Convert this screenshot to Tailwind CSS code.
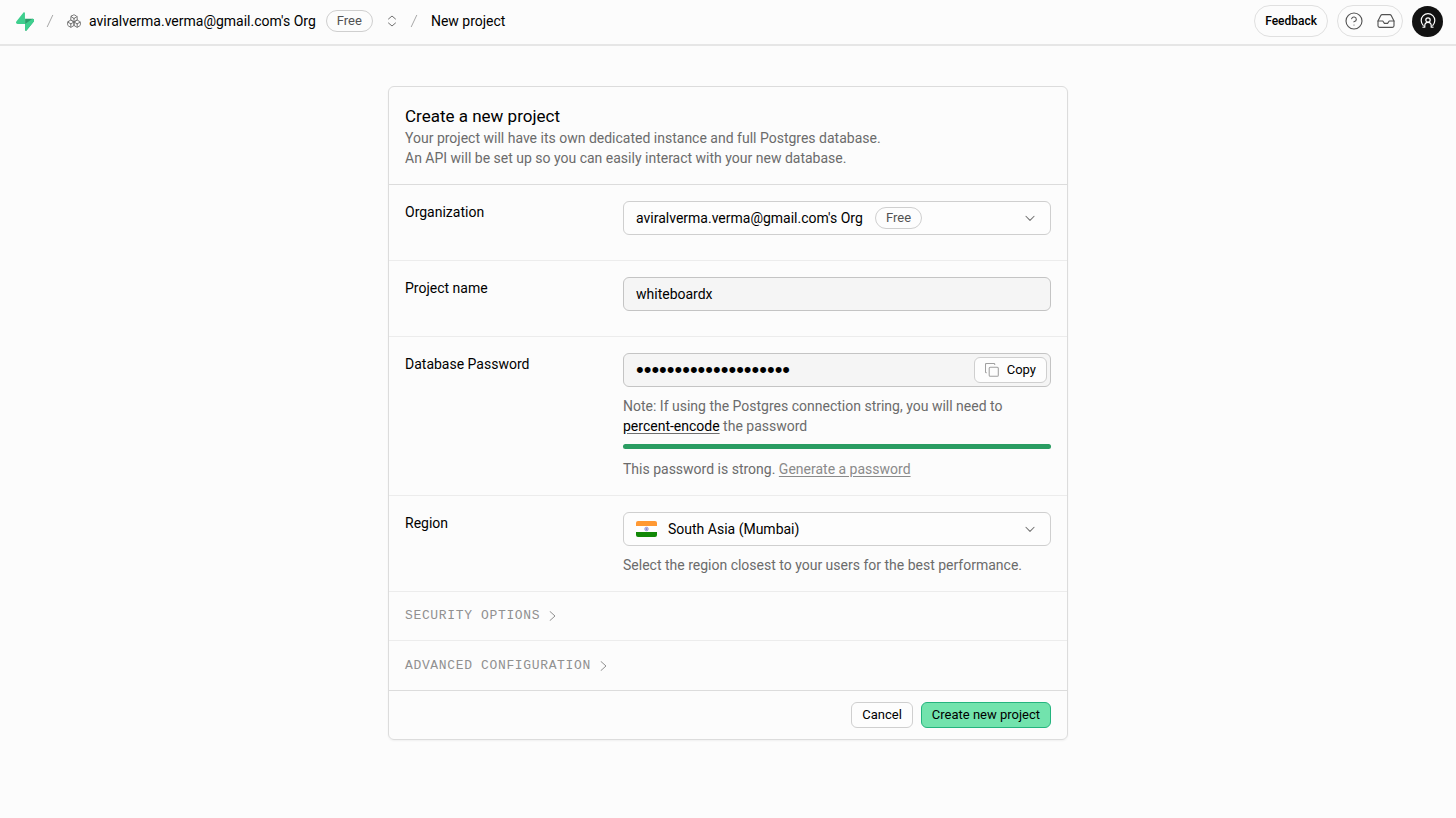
<!DOCTYPE html>
<html lang="en">
<head>
  <meta charset="UTF-8" />
  <meta name="viewport" content="width=device-width, initial-scale=1.0" />
  <title>New project</title>
  <script src="https://cdn.jsdelivr.net/npm/@tailwindcss/browser@4"></script>
</head>
<body class="min-h-screen bg-[#fcfcfc] font-['Roboto',sans-serif] text-[14px] leading-5 text-[#171717]">

  <header class="flex items-center justify-between h-[46px] pb-[2px] pl-4 pr-[13px] border-b-2 border-[#e6e6e6]">
    <nav class="flex items-center" aria-label="Breadcrumb">
      <a href="#" aria-label="Home">
        <svg class="w-[18px] h-[19px]" viewBox="0 0 109 113" fill="none">
          <path d="M63.7 110.3c-2.9 3.6-8.7 1.6-8.7-3V40h45.2c8.2 0 12.8 9.5 7.7 15.9z" fill="#2a9d6a" />
          <path d="M63.7 110.3c-2.9 3.6-8.7 1.6-8.7-3V72l45-32c8.4 0 13 9.5 7.9 15.9z" fill="#3ecf8e" />
          <path d="M45.3 2.1c2.9-3.6 8.7-1.6 8.8 3l.4 67.2H9.8c-8.2 0-12.8-9.5-7.7-15.9z" fill="#3ecf8e" />
        </svg>
      </a>
      <svg class="ml-2 w-4 h-4 text-[#a8a8a8]" viewBox="0 0 24 24" fill="none" stroke="currentColor" stroke-width="1.5" stroke-linecap="round"><path d="M16 3.5 8 20.5" /></svg>
      <a href="#" class="ml-[9px] flex items-center gap-2 text-black">
        <svg class="w-[14px] h-[14px] text-[#707070]" viewBox="1 1 22 22" fill="none" stroke="currentColor" stroke-width="1.5" stroke-linecap="round" stroke-linejoin="round">
          <path d="M2.97 12.92A2 2 0 0 0 2 14.63v3.24a2 2 0 0 0 .97 1.71l3 1.8a2 2 0 0 0 2.06 0L12 19v-5.5l-5-3-4.03 2.42Z" />
          <path d="m7 16.5-4.74-2.85M7 16.5l5-3M7 16.5v5.17" />
          <path d="M12 13.5V19l3.97 2.38a2 2 0 0 0 2.06 0l3-1.8a2 2 0 0 0 .97-1.71v-3.24a2 2 0 0 0-.97-1.71L17 10.5l-5 3Z" />
          <path d="m17 16.5-5-3M17 16.5l4.74-2.85M17 16.5v5.17" />
          <path d="M7.97 4.42A2 2 0 0 0 7 6.13v4.37l5 3 5-3V6.13a2 2 0 0 0-.97-1.71l-3-1.8a2 2 0 0 0-2.06 0l-3 1.8Z" />
          <path d="M12 8 7.26 5.15M12 8l4.74-2.85M12 13.5V8" />
        </svg>
        <span>aviralverma.verma@gmail.com's Org</span>
        <span class="ml-[2px] px-[10px] h-[22px] leading-5 rounded-full border border-[#cfcfcf] text-[13px] text-[#525252]">Free</span>
      </a>
      <button type="button" class="ml-[13px] text-[#707070]" aria-label="Switch organization">
        <svg class="w-3 h-3" viewBox="0 0 24 24" fill="none" stroke="currentColor" stroke-width="2" stroke-linecap="round" stroke-linejoin="round"><path d="m5 8 7-6 7 6M5 16l7 6 7-6" /></svg>
      </button>
      <svg class="ml-2 w-4 h-4 text-[#a8a8a8]" viewBox="0 0 24 24" fill="none" stroke="currentColor" stroke-width="1.5" stroke-linecap="round"><path d="M16 3.5 8 20.5" /></svg>
      <span class="ml-[9px] text-black">New project</span>
    </nav>

    <div class="flex items-center gap-[9px]">
      <button type="button" class="h-8 px-[10px] rounded-full border border-[#e0e0e0] text-[12px] font-medium text-black">Feedback</button>
      <div class="flex items-center gap-4 h-8 px-2 rounded-full border border-[#e0e0e0] text-[#525252]">
        <button type="button" aria-label="Help">
          <svg class="w-4 h-4 overflow-visible" viewBox="2 2 20 20" fill="none" stroke="currentColor" stroke-width="1.4" stroke-linecap="round" stroke-linejoin="round"><circle cx="12" cy="12" r="10" /><path d="M9.09 9a3 3 0 0 1 5.83 1c0 2-3 3-3 3M12 17h.01" /></svg>
        </button>
        <button type="button" aria-label="Inbox">
          <svg class="w-4 h-4 overflow-visible" viewBox="2 2 20 20" fill="none" stroke="currentColor" stroke-width="1.4" stroke-linecap="round" stroke-linejoin="round"><path d="M22 12h-6l-2 3h-4l-2-3H2" /><path d="M5.45 5.11 2 12v6a2 2 0 0 0 2 2h16a2 2 0 0 0 2-2v-6l-3.45-6.89A2 2 0 0 0 16.76 4H7.24a2 2 0 0 0-1.79 1.11z" /></svg>
        </button>
      </div>
      <button type="button" class="flex items-center justify-center w-[31px] h-[31px] rounded-full bg-[#121212] text-white" aria-label="Account">
        <svg class="w-4 h-4" viewBox="0 0 16 16" fill="none" stroke="currentColor" stroke-width="1.2" stroke-linecap="round" stroke-linejoin="round">
          <path d="M3 14.2h1.8v-1.7c0-2 1.3-3.2 3.200-3.2s3.200 1.2 3.200 3.200v1.700H13" />
          <path d="M3.2 12.3a6.8 6.8 0 1 1 9.6 0" />
          <circle cx="8" cy="7" r="2.2" />
        </svg>
      </button>
    </div>
  </header>

  <main class="px-4 pt-10 pb-10">
    <form class="max-w-[680px] mx-auto rounded-md border border-[#dcdcdc] shadow-xs" onsubmit="return false">
      <div class="px-4 pt-[18px] pb-4 border-b border-[#dcdcdc]">
        <h1 class="text-[17px] leading-[23px] text-black">Create a new project</h1>
        <p class="text-[#6b6b6b]">Your project will have its own dedicated instance and full Postgres database.<br />An API will be set up so you can easily interact with your new database.</p>
      </div>

      <div class="grid grid-cols-3 gap-2 px-4 pt-4 pb-[25px] border-b border-[#ececec]">
        <label for="organization" class="text-black leading-[22px]">Organization</label>
        <div class="col-span-2 relative">
          <select id="organization" class="block w-full h-[34px] pl-3 pr-10 appearance-none rounded-md border border-[#cfcfcf] bg-[#fdfdfd] text-black">
            <option>aviralverma.verma@gmail.com's Org</option>
          </select>
          <span class="absolute left-[252px] top-[6px] px-[10px] h-[22px] leading-5 rounded-full border border-[#cfcfcf] text-[13px] text-[#525252] pointer-events-none">Free</span>
          <svg class="absolute right-[14px] top-[10px] w-[14px] h-[14px] text-[#707070] pointer-events-none" viewBox="0 0 24 24" fill="none" stroke="currentColor" stroke-width="1.8" stroke-linecap="round" stroke-linejoin="round"><path d="m5 9 7 7 7-7" /></svg>
        </div>
      </div>

      <div class="grid grid-cols-3 gap-2 px-4 pt-4 pb-[25px] border-b border-[#ececec]">
        <label for="project-name" class="text-black leading-[22px]">Project name</label>
        <input id="project-name" type="text" value="whiteboardx" class="col-span-2 w-full h-[34px] px-3 rounded-md border border-[#c4c4c4] bg-[#f5f5f5] text-black" />
      </div>

      <div class="grid grid-cols-3 gap-2 px-4 pt-4 pb-4 border-b border-[#ececec]">
        <label for="db-password" class="text-black leading-[22px]">Database Password</label>
        <div class="col-span-2">
          <div class="relative">
            <input id="db-password" type="password" value="kT7vQx2mWz9LrB4nHs6P" class="block w-full h-[34px] pl-3 pr-20 rounded-md border border-[#c4c4c4] bg-[#f5f5f5] font-['Liberation_Sans',sans-serif] text-[22px] text-black" />
            <button type="button" class="absolute right-1 top-1 flex items-center gap-2 h-[26px] px-[10px] rounded-md border border-[#cfcfcf] bg-[#fdfdfd] text-[13px] text-black">
              <svg class="w-[14px] h-[14px] text-[#a0a0a0]" viewBox="2 2 20 20" fill="none" stroke="currentColor" stroke-width="1.5" stroke-linecap="round" stroke-linejoin="round"><rect x="8" y="8" width="13" height="13" rx="1.5" /><path d="M4 16c-.8 0-1.3-.6-1.3-1.3V4c0-.8.5-1.3 1.3-1.3h10.7c.7 0 1.3.5 1.3 1.3" /></svg>
              Copy
            </button>
          </div>
          <p class="mt-[9px] text-[#6b6b6b]">Note: If using the Postgres connection string, you will need to<br /><a href="#" class="text-black underline underline-offset-2 decoration-[#707070]">percent-encode</a> the password</p>
          <div class="mt-2 h-[5px] rounded-full bg-[#e6e6e6]">
            <div class="h-full rounded-full bg-[#2a9d62]" style="width: 100%"></div>
          </div>
          <p class="mt-[10px] text-[#6b6b6b]">This password is strong. <button type="button" class="text-[#8a8a8a] underline underline-offset-2">Generate a password</button></p>
        </div>
      </div>

      <div class="grid grid-cols-3 gap-2 px-4 pt-4 pb-4 border-b border-[#ececec]">
        <label for="region" class="text-black leading-[22px]">Region</label>
        <div class="col-span-2">
          <div class="relative">
            <select id="region" class="block w-full h-[34px] pl-11 pr-10 appearance-none rounded-md border border-[#cfcfcf] bg-[#fdfdfd] text-black">
              <option>South Asia (Mumbai)</option>
            </select>
            <svg class="absolute left-[13px] top-[9px] w-[21px] h-4 rounded-xs pointer-events-none" viewBox="0 0 21 16">
              <rect width="21" height="16" fill="#fff" />
              <rect width="21" height="5" fill="#ff9933" />
              <rect y="11" width="21" height="5" fill="#128807" />
              <circle cx="10.5" cy="8" r="1.9" fill="#b8b8e6" stroke="#8888cc" stroke-width=".5" />
              <circle cx="10.5" cy="8" r=".6" fill="#5c5cb8" />
            </svg>
            <svg class="absolute right-[14px] top-[10px] w-[14px] h-[14px] text-[#707070] pointer-events-none" viewBox="0 0 24 24" fill="none" stroke="currentColor" stroke-width="1.8" stroke-linecap="round" stroke-linejoin="round"><path d="m5 9 7 7 7-7" /></svg>
          </div>
          <p class="mt-[9px] text-[#6b6b6b]">Select the region closest to your users for the best performance.</p>
        </div>
      </div>

      <button type="button" class="flex items-center gap-2 w-full h-[49px] px-4 border-b border-[#ececec] font-['Liberation_Mono',monospace] text-[13px] tracking-wider uppercase text-[#909090]">
        Security options
        <svg class="w-[10px] h-[10px]" viewBox="0 0 10 10" fill="none" stroke="currentColor" stroke-linecap="round" stroke-linejoin="round"><path d="m2 .5 5 4.5-5 4.5" /></svg>
      </button>
      <button type="button" class="flex items-center gap-2 w-full h-[50px] px-4 border-b border-[#dcdcdc] font-['Liberation_Mono',monospace] text-[13px] tracking-wider uppercase text-[#909090]">
        Advanced configuration
        <svg class="w-[10px] h-[10px]" viewBox="0 0 10 10" fill="none" stroke="currentColor" stroke-linecap="round" stroke-linejoin="round"><path d="m2 .5 5 4.5-5 4.5" /></svg>
      </button>

      <div class="flex items-center justify-end gap-2 h-12 px-4">
        <button type="button" class="h-[26px] px-[10px] rounded-md border border-[#cfcfcf] bg-[#fdfdfd] text-[13px] text-black">Cancel</button>
        <button type="submit" class="h-[26px] px-[10px] rounded-md border border-[#24b47e] bg-[#72e3ad] text-[13px] text-black">Create new project</button>
      </div>
    </form>
  </main>

</body>
</html>
